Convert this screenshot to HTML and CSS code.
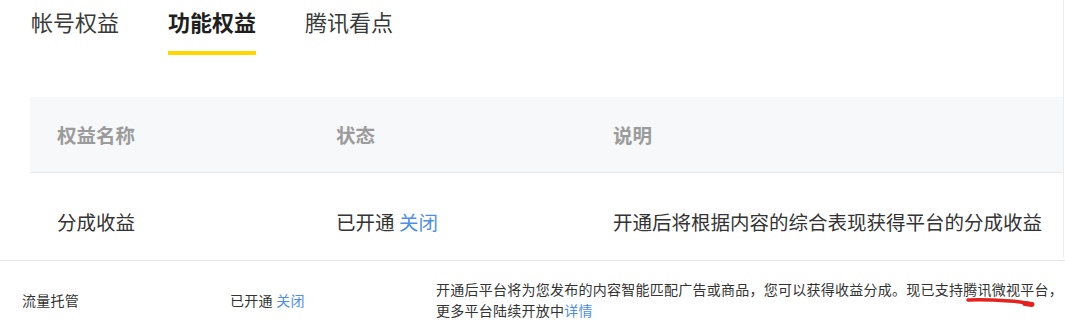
FILE: index.html
```html
<!DOCTYPE html>
<html lang="zh-CN">
<head>
<meta charset="utf-8">
<title>功能权益</title>
<link rel="stylesheet" href="styles.css">
</head>
<body>
<div class="panel">
  <nav class="tabs">
    <div class="tab">帐号权益</div>
    <div class="tab active">功能权益</div>
    <div class="tab">腾讯看点</div>
  </nav>
  <div class="table">
    <div class="thead">
      <div>权益名称</div>
      <div>状态</div>
      <div>说明</div>
    </div>
    <div class="trow">
      <div>分成收益</div>
      <div>已开通 <a class="link">关闭</a></div>
      <div>开通后将根据内容的综合表现获得平台的分成收益</div>
    </div>
  </div>
</div>
<div class="small">
  <div class="srow">
    <div>流量托管</div>
    <div>已开通 <a class="link">关闭</a></div>
    <div class="desc">开通后平台将为您发布的内容智能匹配广告或商品，您可以获得收益分成。现已支持腾讯微视平台，<br>更多平台陆续开放中<a class="link">详情</a>
      <svg class="mark" width="72" height="14" viewBox="0 0 72 14"><path d="M3 5 C 15 4.5, 30 5, 45 6 S 60 8, 66 9" fill="none" stroke="#e3211f" stroke-width="3.6" stroke-linecap="round"/><path d="M60 8.5 L67 9.5" stroke="#e3211f" stroke-width="5" stroke-linecap="round"/></svg>
    </div>
  </div>
</div>
</body>
</html>
```
FILE: styles.css
```css
* { box-sizing: border-box; }
body {
  margin: 0;
  background: #fff;
  font-family: "Noto Sans CJK SC", "Microsoft YaHei", sans-serif;
  color: #333;
}
.panel {
  width: 1064px;
  height: 257px;
  overflow: hidden;
  border-right: 1px solid #ececec;
}
.tabs {
  display: flex;
  gap: 49px;
  padding-left: 31px;
  padding-top: 10px;
}
.tab {
  font-size: 22px;
  line-height: 22px;
  height: 45px;
  color: #3a3a3a;
  border-bottom: 4px solid transparent;
}
.tab.active {
  font-weight: 700;
  color: #1f1f1f;
  border-bottom-color: #ffd600;
}
.table {
  margin-top: 42px;
  margin-left: 30px;
}
.thead, .trow {
  display: grid;
  grid-template-columns: 279px 277px 1fr;
  padding-left: 27px;
  align-items: center;
  font-size: 19.5px;
}
.thead {
  height: 76px;
  background: #f7f8f9;
  border-bottom: 1px solid #e9e9e9;
  color: #9b9b9b;
  font-weight: 700;
}
.trow {
  height: 97px;
  color: #333;
}
.link {
  color: #4f8ee2;
  text-decoration: none;
}
.small {
  margin-top: 3px;
  border-top: 1px solid #e6e6e6;
}
.srow {
  display: grid;
  grid-template-columns: 208px 206px 1fr;
  padding-left: 22px;
  height: 78px;
  align-items: center;
  font-size: 14px;
  line-height: 21px;
  letter-spacing: 0.25px;
  color: #333;
}
.desc {
  position: relative;
  white-space: nowrap;
}
.mark {
  position: absolute;
  left: 529px;
  top: 16px;
}
```
